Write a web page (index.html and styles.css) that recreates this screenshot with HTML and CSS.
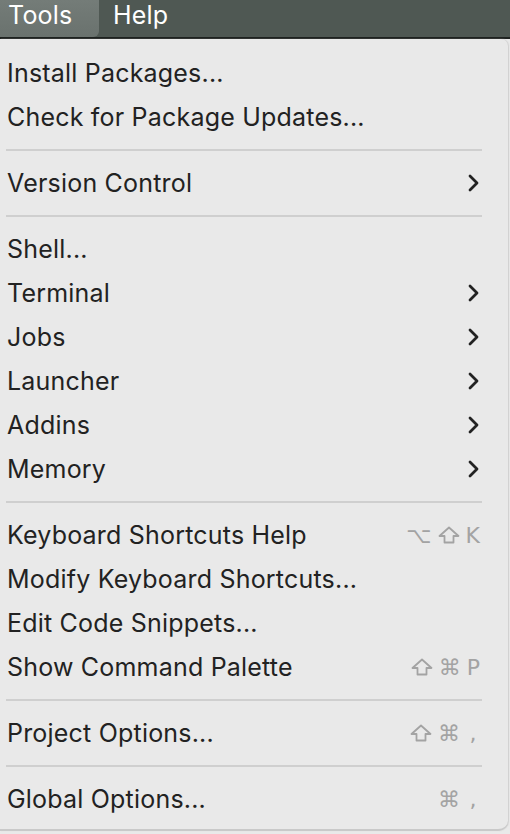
FILE: index.html
```html
<!DOCTYPE html>
<html>
<head>
<meta charset="utf-8">
<link rel="stylesheet" href="styles.css">
</head>
<body>
<div class="menubar">
  <div class="mb-item active">Tools</div>
  <div class="mb-item">Help</div>
</div>
<div class="menu">
  <div class="row"><span class="label">Install Packages...</span></div>
  <div class="row"><span class="label">Check for Package Updates...</span></div>
  <div class="sep"></div>
  <div class="row"><span class="label">Version Control</span><svg class="chev" viewBox="0 0 12 18"><path d="M2 2 L9 9 L2 16"/></svg></div>
  <div class="sep"></div>
  <div class="row"><span class="label">Shell...</span></div>
  <div class="row"><span class="label">Terminal</span><svg class="chev" viewBox="0 0 12 18"><path d="M2 2 L9 9 L2 16"/></svg></div>
  <div class="row"><span class="label">Jobs</span><svg class="chev" viewBox="0 0 12 18"><path d="M2 2 L9 9 L2 16"/></svg></div>
  <div class="row"><span class="label">Launcher</span><svg class="chev" viewBox="0 0 12 18"><path d="M2 2 L9 9 L2 16"/></svg></div>
  <div class="row"><span class="label">Addins</span><svg class="chev" viewBox="0 0 12 18"><path d="M2 2 L9 9 L2 16"/></svg></div>
  <div class="row"><span class="label">Memory</span><svg class="chev" viewBox="0 0 12 18"><path d="M2 2 L9 9 L2 16"/></svg></div>
  <div class="sep"></div>
  <div class="row"><span class="label">Keyboard Shortcuts Help</span><span class="keys"><span class="k">⌥</span><svg class="shift" viewBox="0 0 22 18"><path d="M11 1.5 L20.5 10 H15.5 V16.5 H6.5 V10 H1.5 Z"/></svg><span class="k">K</span></span></div>
  <div class="row"><span class="label">Modify Keyboard Shortcuts...</span></div>
  <div class="row"><span class="label">Edit Code Snippets...</span></div>
  <div class="row"><span class="label">Show Command Palette</span><span class="keys"><svg class="shift" viewBox="0 0 22 18"><path d="M11 1.5 L20.5 10 H15.5 V16.5 H6.5 V10 H1.5 Z"/></svg><span class="k">⌘</span><span class="k">P</span></span></div>
  <div class="sep"></div>
  <div class="row"><span class="label">Project Options...</span><span class="keys"><svg class="shift" viewBox="0 0 22 18"><path d="M11 1.5 L20.5 10 H15.5 V16.5 H6.5 V10 H1.5 Z"/></svg><span class="k">⌘</span><span class="k comma">,</span></span></div>
  <div class="sep"></div>
  <div class="row"><span class="label">Global Options...</span><span class="keys"><span class="k">⌘</span><span class="k comma">,</span></span></div>
</div>
</body>
</html>
```
FILE: styles.css
```css
html, body {
  margin: 0;
  padding: 0;
}
body {
  width: 510px;
  height: 834px;
  background: #e9e9e9;
  font-family: Inter, "Noto Sans", "DejaVu Sans", sans-serif;
  overflow: hidden;
}
.menubar {
  height: 37px;
  background: #4f5853;
  border-bottom: 2px solid #1e2220;
  display: flex;
  align-items: stretch;
}
.mb-item {
  color: #ffffff;
  font-size: 25px;
  line-height: 28px;
  padding: 1px 12px 0 14px;
  letter-spacing: 0.2px;
}
.mb-item.active {
  width: 79px;
  padding: 1px 12px 0 8px;
  background: linear-gradient(#747c78, #6a726e);
  border-bottom-right-radius: 6px;
}
.menu {
  margin: 0 2px 0 0;
  background: #e9e9e9;
  border-top-right-radius: 7px;
  border-bottom-right-radius: 10px;
  padding: 12px 0 8px;
  border-bottom: 2px solid #c9c9c9;
  box-shadow: 1px 0 1px #d0d0d0;
}
.row {
  height: 44px;
  display: flex;
  align-items: center;
  padding: 0 28px 0 7px;
  color: #222222;
  font-size: 25px;
  letter-spacing: 0.2px;
}
.label {
  flex: 1;
}
.chev {
  width: 12px;
  height: 18px;
  fill: none;
  stroke: #222;
  stroke-width: 2.8;
  stroke-linecap: round;
  stroke-linejoin: round;
}
.keys {
  display: flex;
  align-items: center;
  gap: 6px;
  color: #a3a3a3;
  font-size: 22px;
  letter-spacing: 0;
  font-family: "DejaVu Sans", sans-serif;
}
.shift {
  width: 22px;
  height: 18px;
  fill: none;
  stroke: #a3a3a3;
  stroke-width: 1.8;
  stroke-linejoin: round;
}
.k.comma {
  width: 14px;
  text-align: center;
}
.sep {
  height: 22px;
  display: flex;
  align-items: center;
  padding: 0 26px 0 6px;
}
.sep::before {
  content: "";
  display: block;
  flex: 1;
  height: 2px;
  background: #cfcfcf;
}
```
